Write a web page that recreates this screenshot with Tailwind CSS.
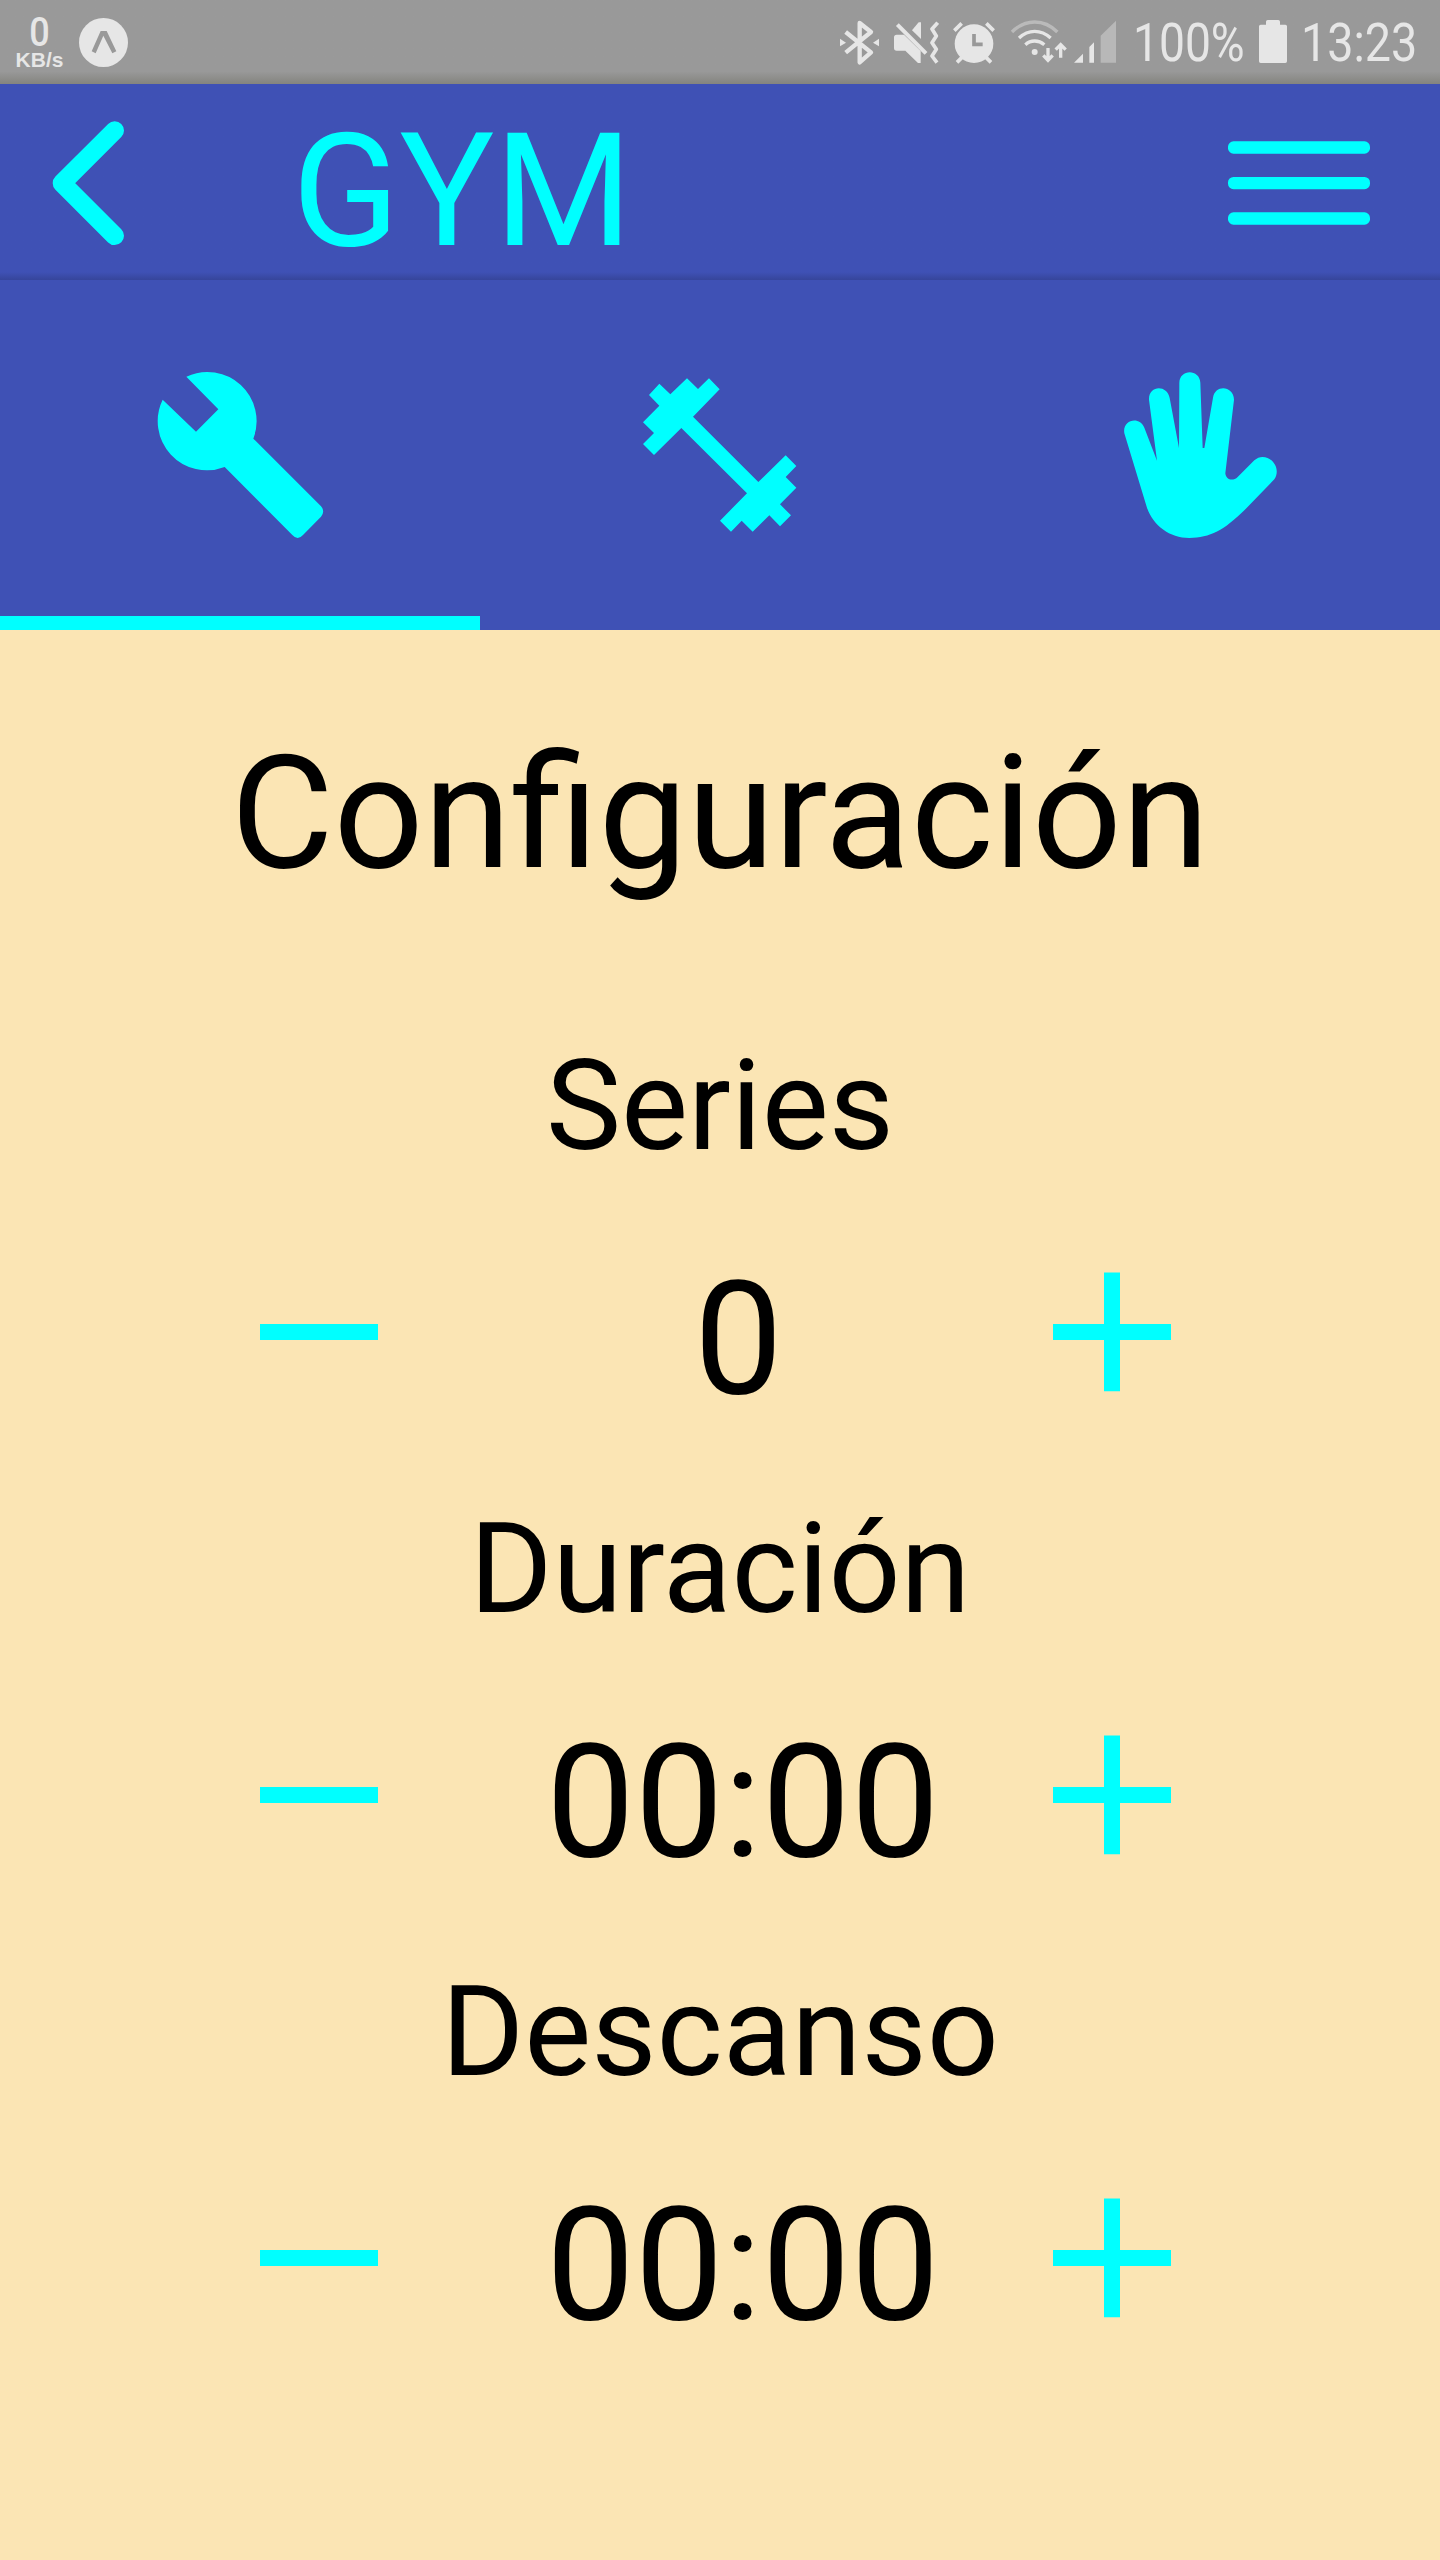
<!DOCTYPE html>
<html lang="es">
<head>
<meta charset="utf-8">
<title>GYM</title>
<script src="https://cdn.jsdelivr.net/npm/@tailwindcss/browser@4"></script>
</head>
<body class="w-[1440px] h-[2560px] overflow-hidden bg-[#fbe5b4] font-[Roboto,sans-serif] text-black flex flex-col">

  <!-- Status bar -->
  <div class="h-[84px] shrink-0 flex items-start bg-[#999999] bg-linear-to-b from-[#999999] from-85% to-[#84847f] text-[#e6e6e6]">
    <div class="ml-[15px] w-[49px] pt-[14px] flex flex-col items-center">
      <span class="text-[40px] leading-[37px] font-medium scale-x-[.9]">0</span>
      <span class="-mt-px font-['Liberation_Sans',sans-serif] font-bold text-[21px] leading-[19px]">KB/s</span>
    </div>
    <svg class="ml-[15px] w-[49px] h-[84px]" viewBox="237 0 147 252">
      <circle cx="310.5" cy="127.500" r="73.500" fill="#e6e6e6"/>
      <path d="M302 93h18l29 61-12 6-27-53-23 53-12-6z" fill="#999"/>
    </svg>
    <div class="flex ml-[712px]">
      <svg class="w-[39px] h-[84px]" viewBox="60 0 117 252" fill="none" stroke="#e6e6e6" stroke-width="13" stroke-linejoin="round">
        <path d="M77 96l76 61-34 30V69l34 27-76 62"/>
        <path d="M60 116l18 12-18 11zM177 116l-18 12 18 11z" fill="#e6e6e6" stroke="none"/>
      </svg>
      <svg class="ml-[15px] w-[45px] h-[84px]" viewBox="222 0 135 252" fill="#e6e6e6">
        <path d="M230 104h22l50 49v36h-8l-38-37h-26q-8 0-8-8v-32q0-8 8-8z"/>
        <path d="M276 91l20-24h7v50z"/>
        <path d="M232 74l86 86" stroke="#e6e6e6" stroke-width="12"/>
        <path d="M353 68l-17 19 13 21-13 20 13 20-13 20 15 20" fill="none" stroke="#e6e6e6" stroke-width="11" stroke-linejoin="round"/>
      </svg>
      <svg class="ml-[14px] w-[42px] h-[84px]" viewBox="399 0 126 252">
        <circle cx="462" cy="131" r="58" fill="#e6e6e6"/>
        <path d="M403 92l22-22M521 92l-22-22M411 187l18-18M513 187l-18-18" stroke="#e6e6e6" stroke-width="11"/>
        <path d="M462 102v31h26" fill="none" stroke="#999" stroke-width="11"/>
      </svg>
      <svg class="ml-[15px] w-[57px] h-[84px]" viewBox="570 0 171 252" fill="none" stroke="#e6e6e6" stroke-width="10">
        <path d="M576 96Q606 66 644 66T712 96" stroke="#bababa"/>
        <path d="M597 114Q618 94 644 94T692 114M616 134Q628 123 644 123T673 134"/>
        <circle cx="644" cy="156" r="9" fill="#e6e6e6" stroke="none"/>
        <path d="M684 144v36M670 166l14 15 14-15M722 173v-38M707 149l15-15 15 15" stroke-width="10"/>
      </svg>
      <svg class="ml-[7px] w-[42px] h-[84px]" viewBox="762 0 126 252" fill="#e6e6e6">
        <path d="M762 188l27-27v27zM808 141l14-14v61h-14z"/>
        <path d="M842 107l46-45v126h-46z" fill="#b8b8b8"/>
      </svg>
    </div>
    <span class="ml-[17px] w-[126px] pt-[11px] text-[54px] leading-[64px] origin-left scale-x-[.855]">100%</span>
    <svg class="w-[28px] h-[84px]" viewBox="447 0 84 252" fill="#e6e6e6">
      <path d="M452 74h16v-9q0-5 5-5h32q5 0 5 5v9h16q5 0 5 5v105q0 5-5 5h-74q-5 0-5-5V79q0-5 5-5z"/>
    </svg>
    <span class="ml-[14px] w-[126px] pt-[11px] text-[54px] leading-[64px] origin-left scale-x-[.865]">13:23</span>
  </div>

  <!-- App bar -->
  <header class="h-[196px] shrink-0 flex items-start bg-[#3f51b5] bg-linear-to-b from-[#3f51b5] from-96% to-[#36459b] text-[#00ffff]">
    <svg class="ml-[50px] mt-[33px] w-[78px] h-[132px]" viewBox="50 117 78 132" fill="none" stroke="currentColor" stroke-width="18.600" stroke-linecap="round" stroke-linejoin="round">
      <path d="M114.700 130.500L62 183.200l52.700 52.600"/>
    </svg>
    <h1 class="ml-[164px] mt-[7px] w-[400px] text-[158px] leading-[200px] h-[189px]">GYM</h1>
    <svg class="ml-auto mr-[69px] mt-[53px] w-[144px] h-[92px]" viewBox="1227 137 144 92" fill="currentColor">
      <rect x="1228" y="141.300" width="142" height="12.400" rx="5.500"/>
      <rect x="1228" y="177" width="142" height="12.200" rx="5.500"/>
      <rect x="1228" y="212.300" width="142" height="12.400" rx="5.500"/>
    </svg>
  </header>

  <!-- Tabs -->
  <nav class="h-[350px] shrink-0 grid grid-cols-3 bg-[#3f51b5] text-[#00ffff]">
    <div class="flex flex-col border-b-[14px] border-[#00ffff]">
      <svg class="ml-[130px] mt-[70px] w-[220px] h-[210px]" viewBox="0 0 660 630" fill="currentColor">
        <path d="M169 80A147.500 147.500 0 0 1 370 266L573 469Q586 484 573 500L519 555Q503 573 487 555L284 351A147.500 147.500 0 0 1 98 149L198 245 265 178z"/>
      </svg>
    </div>
    <div class="flex flex-col">
      <svg class="ml-[140px] mt-[70px] w-[200px] h-[210px]" viewBox="0 0 600 630" fill="currentColor">
        <path d="M118 101l33 32 50-48 33 32 33-32 32 33-80 82 196 196 82-80 32 32-32 33 32 32-49 50 33 33-33 33-32-33-50 49-33-33-32 33-33-33 81-82-197-196-82 81-33-33 33-33-33-32 49-50-31-32z"/>
      </svg>
    </div>
    <div class="flex flex-col">
      <svg class="ml-[140px] mt-[70px] w-[200px] h-[210px]" viewBox="0 0 600 630" fill="currentColor">
        <path d="M73 250C66 208 119 197 133 233L171 332 147 149C145 105 202 103 209 144L237 294 238 98C239 56 299 56 301 98L308 294H313L339 143C345 102 401 106 402 149L376 370C378 391 400 394 413 381L463 331C495 300 550 345 523 388L433 481C373 540 330 564 268 564 208 564 157 525 140 470z"/>
      </svg>
    </div>
  </nav>

  <!-- Settings -->
  <main class="flex flex-col">
    <h2 class="mt-[83px] h-[200px] text-center text-[158px] leading-[200px]">Configuración</h2>

    <section class="mt-[113px] h-[463px]">
      <h3 class="h-[160px] text-center text-[126.500px] leading-[160px]">Series</h3>
      <div class="mt-[51px] h-[200px] flex text-[#00ffff]">
        <svg class="ml-[260px] mt-[35px] w-[118px] h-[120px]" viewBox="0 0 118 120" fill="currentColor"><path d="M0 52h118v16H0z"/></svg>
        <span class="ml-[316px] mt-[2px] w-[359px] text-black text-[158px] leading-[200px]">0</span>
        <svg class="mt-[35px] w-[118px] h-[120px]" viewBox="0 0 118 120" fill="currentColor"><path d="M0 52h51V.5h16V52h51v16H67v51.300H51V68H0z"/></svg>
      </div>
    </section>

    <section class="h-[463px]">
      <h3 class="h-[160px] text-center text-[126.500px] leading-[160px]">Duración</h3>
      <div class="mt-[51px] h-[200px] flex text-[#00ffff]">
        <svg class="ml-[260px] mt-[35px] w-[118px] h-[120px]" viewBox="0 0 118 120" fill="currentColor"><path d="M0 52h118v16H0z"/></svg>
        <span class="ml-[168px] mt-[2px] w-[507px] text-black text-[158px] leading-[200px]">00:00</span>
        <svg class="mt-[35px] w-[118px] h-[120px]" viewBox="0 0 118 120" fill="currentColor"><path d="M0 52h51V.5h16V52h51v16H67v51.300H51V68H0z"/></svg>
      </div>
    </section>

    <section class="h-[463px]">
      <h3 class="h-[160px] text-center text-[126.500px] leading-[160px]">Descanso</h3>
      <div class="mt-[51px] h-[200px] flex text-[#00ffff]">
        <svg class="ml-[260px] mt-[35px] w-[118px] h-[120px]" viewBox="0 0 118 120" fill="currentColor"><path d="M0 52h118v16H0z"/></svg>
        <span class="ml-[168px] mt-[2px] w-[507px] text-black text-[158px] leading-[200px]">00:00</span>
        <svg class="mt-[35px] w-[118px] h-[120px]" viewBox="0 0 118 120" fill="currentColor"><path d="M0 52h51V.5h16V52h51v16H67v51.300H51V68H0z"/></svg>
      </div>
    </section>
  </main>
</body>
</html>
